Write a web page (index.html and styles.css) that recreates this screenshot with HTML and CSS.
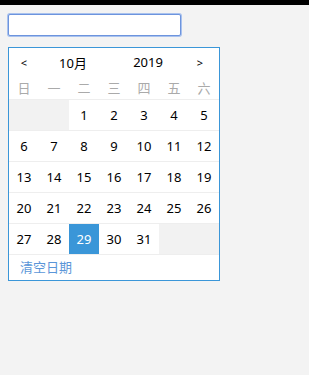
FILE: index.html
```
<!DOCTYPE html>
<html lang="zh">
<head>
  <meta charset="UTF-8">
  <title>日期选择</title>
  <link rel="stylesheet" href="styles.css">
</head>
<body>
  <div class="topbar"></div>
  <div class="page">
    <input class="date-input" type="text">
    <div class="calendar">
      <div class="cal-head">
        <span class="nav">&lt;</span>
        <span class="month">10月</span>
        <span class="year">2019</span>
        <span class="nav next">&gt;</span>
      </div>
      <div class="weekdays">
        <span>日</span><span>一</span><span>二</span><span>三</span><span>四</span><span>五</span><span>六</span>
      </div>
      <div class="days">
        <span class="empty"></span><span class="empty"></span><span>1</span><span>2</span><span>3</span><span>4</span><span>5</span>
        <span>6</span><span>7</span><span>8</span><span>9</span><span>10</span><span>11</span><span>12</span>
        <span>13</span><span>14</span><span>15</span><span>16</span><span>17</span><span>18</span><span>19</span>
        <span>20</span><span>21</span><span>22</span><span>23</span><span>24</span><span>25</span><span>26</span>
        <span>27</span><span>28</span><span class="today">29</span><span>30</span><span>31</span><span class="empty"></span><span class="empty"></span>
      </div>
      <div class="cal-foot">清空日期</div>
    </div>
  </div>
</body>
</html>
```
FILE: styles.css
```
body {
  margin: 0;
  background: #f3f3f3;
  font-family: "Noto Sans", "Noto Sans CJK SC", sans-serif;
  font-size: 13px;
  color: #000;
}
.topbar {
  height: 5px;
  background: #000;
}
.page {
  padding: 9px 8px;
}
.date-input {
  display: block;
  box-sizing: border-box;
  width: 173px;
  height: 22px;
  margin: 0;
  border: 1px solid #6d94dd;
  border-radius: 2px;
  box-shadow: 0 0 0 1px #a9c2ee;
  background: #fff;
  outline: none;
}
.calendar {
  width: 210px;
  margin-top: 11px;
  border: 1px solid #3a96d8;
  background: #fff;
}
.cal-head {
  display: grid;
  grid-template-columns: 30px 68px 82px 22px;
  height: 28px;
  align-items: center;
  text-align: center;
}
.cal-head .nav {
  font-size: 11px;
}
.weekdays {
  display: grid;
  grid-template-columns: repeat(7, 30px);
  height: 23px;
  align-items: center;
  text-align: center;
  color: #aaa;
}
.days {
  display: grid;
  grid-template-columns: repeat(7, 30px);
  border-top: 1px solid #eee;
}
.days span {
  height: 30px;
  line-height: 30px;
  text-align: center;
  border-bottom: 1px solid #eee;
}
.days span.empty {
  background: #f2f2f2;
}
.days span.today {
  background: #3a96d8;
  color: #fff;
}
.cal-foot {
  height: 25px;
  line-height: 25px;
  padding-left: 11px;
  color: #5b96d8;
}
```
